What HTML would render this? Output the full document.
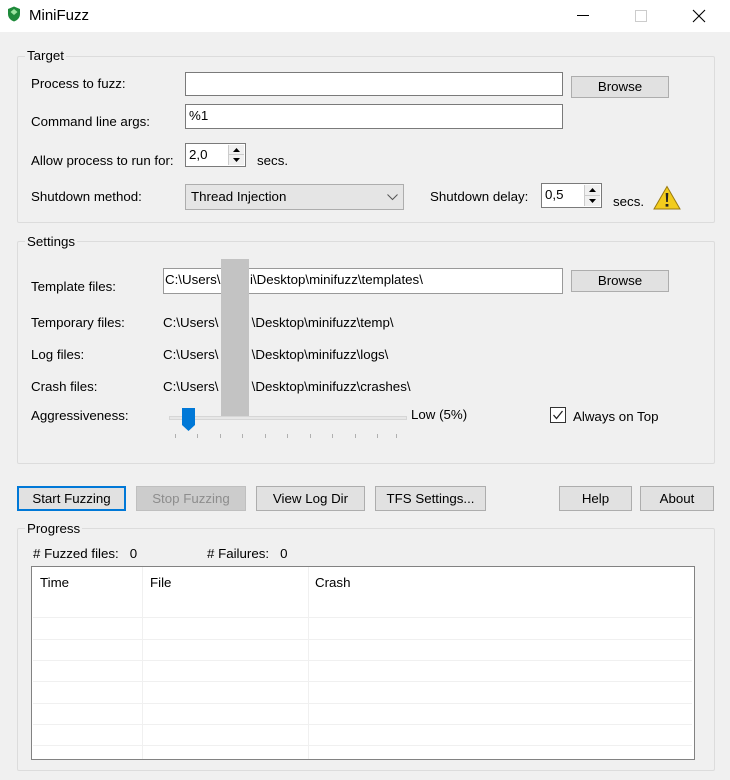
<!DOCTYPE html>
<html><head><meta charset="utf-8">
<style>
*{box-sizing:border-box;margin:0;padding:0}
body{width:730px;height:780px;background:#f0f0f0;font-family:"Liberation Sans",sans-serif;font-size:13.3px;color:#000;position:relative;overflow:hidden}
.a{position:absolute;white-space:nowrap}
.tb{position:absolute;left:0;top:0;width:730px;height:32px;background:#fff}
.grp{position:absolute;border:1px solid #dcdcdc;border-radius:2px}
.gl{position:absolute;background:#f0f0f0;padding:0 2px;line-height:14px}
.in{position:absolute;background:#fff;border:1px solid #7a7a7a;padding:2px 3px;line-height:18px}
.btn{position:absolute;background:#e1e1e1;border:1px solid #adadad;text-align:center;line-height:20px}
.spin{position:absolute;right:1px;top:1px;width:16px;bottom:1px;border-left:1px solid #ccc;background:#f0f0f0}
.spin div{height:50%;border-bottom:1px solid #ccc;position:relative}
.tick{position:absolute;top:434px;width:1px;height:4px;background:#b0b0b0}
.row{position:absolute;left:33px;width:659px;height:1px;background:#f0f0f0}
</style></head><body>
<div class="tb"></div>
<svg class="a" style="left:7px;top:6px" width="14" height="16" viewBox="0 0 14 16"><path d="M7 0.5 L13 3 V8 C13 12 10 14.5 7 15.5 C4 14.5 1 12 1 8 V3 Z" fill="#1e8a3a"/><path d="M7 3 L10.5 6 L7 9 L3.5 6Z" fill="#9be39f"/></svg>
<div class="a" style="left:29px;top:7px;font-size:15px">MiniFuzz</div>
<div class="a" style="left:577px;top:15px;width:12px;height:1px;background:#000"></div>
<div class="a" style="left:635px;top:10px;width:12px;height:12px;border:1px solid #ccc"></div>
<svg class="a" style="left:692px;top:9px" width="14" height="14"><path d="M1 1L13 13M13 1L1 13" stroke="#000" stroke-width="1.1"/></svg>

<div class="grp" style="left:17px;top:56px;width:698px;height:167px"></div>
<div class="gl" style="left:25px;top:49px">Target</div>
<div class="a" style="left:31px;top:76px">Process to fuzz:</div>
<div class="in" style="left:185px;top:72px;width:378px;height:24px"></div>
<div class="btn" style="left:571px;top:76px;width:98px;height:22px">Browse</div>
<div class="a" style="left:31px;top:114px">Command line args:</div>
<div class="in" style="left:185px;top:104px;width:378px;height:25px">%1</div>
<div class="a" style="left:31px;top:153px">Allow process to run for:</div>
<div class="in" style="left:185px;top:143px;width:61px;height:24px">2,0<div class="spin"><div><svg class="a" style="left:4px;top:3px" width="7" height="4"><path d="M0 4L3.5 0L7 4Z"/></svg></div><div style="border:0"><svg class="a" style="left:4px;top:3px" width="7" height="4"><path d="M0 0L3.5 4L7 0Z"/></svg></div></div></div>
<div class="a" style="left:257px;top:153px">secs.</div>
<div class="a" style="left:31px;top:189px">Shutdown method:</div>
<div class="a" style="left:185px;top:184px;width:219px;height:26px;background:#e5e5e5;border:1px solid #adadad;padding:4px 5px">Thread Injection</div>
<svg class="a" style="left:387px;top:194px" width="11" height="7"><path d="M0.5 0.5L5.5 5.5L10.5 0.5" fill="none" stroke="#555"/></svg>
<div class="a" style="left:430px;top:189px">Shutdown delay:</div>
<div class="in" style="left:541px;top:183px;width:61px;height:25px">0,5<div class="spin"><div><svg class="a" style="left:4px;top:3px" width="7" height="4"><path d="M0 4L3.5 0L7 4Z"/></svg></div><div style="border:0"><svg class="a" style="left:4px;top:3px" width="7" height="4"><path d="M0 0L3.5 4L7 0Z"/></svg></div></div></div>
<div class="a" style="left:613px;top:194px">secs.</div>
<svg class="a" style="left:653px;top:185px" width="28" height="25" viewBox="0 0 28 25"><path d="M14 1.5L27 24H1Z" fill="#f2cc1d" stroke="#9a7a10" stroke-width="1"/><path d="M12.7 8H15.3L14.8 17H13.2Z M12.6 19H15.4V21.6H12.6Z" fill="#222"/></svg>

<div class="grp" style="left:17px;top:241px;width:698px;height:223px"></div>
<div class="gl" style="left:25px;top:235px">Settings</div>
<div class="a" style="left:31px;top:279px">Template files:</div>
<div class="in" style="left:163px;top:268px;width:400px;height:26px;padding-left:1px;border-color:#999">C:\Users\&nbsp;&nbsp;&nbsp;&nbsp;&nbsp;&nbsp;&nbsp;&nbsp;i\Desktop\minifuzz\templates\</div>
<div class="btn" style="left:571px;top:270px;width:98px;height:22px">Browse</div>
<div class="a" style="left:31px;top:315px">Temporary files:</div>
<div class="a" style="left:163px;top:315px">C:\Users\&nbsp;&nbsp;&nbsp;&nbsp;&nbsp;&nbsp;&nbsp;&nbsp;&nbsp;\Desktop\minifuzz\temp\</div>
<div class="a" style="left:31px;top:347px">Log files:</div>
<div class="a" style="left:163px;top:347px">C:\Users\&nbsp;&nbsp;&nbsp;&nbsp;&nbsp;&nbsp;&nbsp;&nbsp;&nbsp;\Desktop\minifuzz\logs\</div>
<div class="a" style="left:31px;top:379px">Crash files:</div>
<div class="a" style="left:163px;top:379px">C:\Users\&nbsp;&nbsp;&nbsp;&nbsp;&nbsp;&nbsp;&nbsp;&nbsp;&nbsp;\Desktop\minifuzz\crashes\</div>
<div class="a" style="left:221px;top:259px;width:28px;height:159px;background:#c3c3c3"></div>
<div class="a" style="left:31px;top:408px">Aggressiveness:</div>
<div class="a" style="left:169px;top:416px;width:238px;height:4px;background:#e7e7e7;border:1px solid #d6d6d6"></div>
<svg class="a" style="left:182px;top:408px" width="13" height="23"><path d="M0 0H13V17L6.5 23L0 17Z" fill="#0078d7"/></svg>
<div class="tick" style="left:175px"></div><div class="tick" style="left:197px"></div><div class="tick" style="left:220px"></div><div class="tick" style="left:242px"></div><div class="tick" style="left:265px"></div><div class="tick" style="left:287px"></div><div class="tick" style="left:310px"></div><div class="tick" style="left:332px"></div><div class="tick" style="left:355px"></div><div class="tick" style="left:377px"></div><div class="tick" style="left:396px"></div>
<div class="a" style="left:411px;top:407px">Low (5%)</div>
<div class="a" style="left:550px;top:407px;width:16px;height:16px;border:1px solid #333;background:#fff"></div>
<svg class="a" style="left:552px;top:409px" width="12" height="12"><path d="M1.5 6L4.5 9.5L10.5 2" fill="none" stroke="#222" stroke-width="1.3"/></svg>
<div class="a" style="left:573px;top:409px">Always on Top</div>

<div class="btn" style="left:17px;top:486px;width:109px;height:25px;border:2px solid #0078d7;line-height:21px">Start Fuzzing</div>
<div class="btn" style="left:136px;top:486px;width:110px;height:25px;background:#cccccc;border-color:#bfbfbf;color:#8d8d8d;line-height:23px">Stop Fuzzing</div>
<div class="btn" style="left:256px;top:486px;width:109px;height:25px;line-height:23px">View Log Dir</div>
<div class="btn" style="left:375px;top:486px;width:111px;height:25px;line-height:23px">TFS Settings...</div>
<div class="btn" style="left:559px;top:486px;width:73px;height:25px;line-height:23px">Help</div>
<div class="btn" style="left:640px;top:486px;width:74px;height:25px;line-height:23px">About</div>

<div class="grp" style="left:17px;top:528px;width:698px;height:243px"></div>
<div class="gl" style="left:25px;top:522px">Progress</div>
<div class="a" style="left:33px;top:546px"># Fuzzed files:&nbsp;&nbsp;&nbsp;0</div>
<div class="a" style="left:207px;top:546px"># Failures:&nbsp;&nbsp;&nbsp;0</div>
<div class="a" style="left:31px;top:566px;width:664px;height:194px;background:#fff;border:1px solid #828282"></div>
<div class="a" style="left:142px;top:567px;width:1px;height:192px;background:#f0f0f0"></div>
<div class="a" style="left:308px;top:567px;width:1px;height:192px;background:#f0f0f0"></div>
<div class="a" style="left:40px;top:575px">Time</div>
<div class="a" style="left:150px;top:575px">File</div>
<div class="a" style="left:315px;top:575px">Crash</div>
<div class="row" style="top:617px"></div><div class="row" style="top:639px"></div><div class="row" style="top:660px"></div><div class="row" style="top:681px"></div><div class="row" style="top:703px"></div><div class="row" style="top:724px"></div><div class="row" style="top:745px"></div>
</body></html>
